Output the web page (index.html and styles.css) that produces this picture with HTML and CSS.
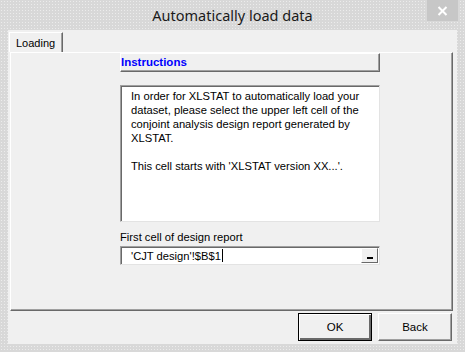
FILE: index.html
```html
<!DOCTYPE html>
<html>
<head>
<meta charset="utf-8">
<link rel="stylesheet" href="styles.css">
</head>
<body>
<div class="window">
  <div class="titlebar">
    <span></span>
    <span class="title">Automatically load data</span>
    <span class="close">
      <svg width="11" height="10" viewBox="0 0 11 10"><path d="M1.5 1 L9.5 9 M9.5 1 L1.5 9" stroke="#fff" stroke-width="2" fill="none"/></svg>
    </span>
  </div>
  <div class="client">
    <div class="tabs">
      <div class="tab">Loading</div>
    </div>
    <div class="panel">
      <div class="content">
        <div class="header">Instructions</div>
        <div class="textbox">
          <p>In order for XLSTAT to automatically load your dataset, please select the upper left cell of the conjoint analysis design report generated by XLSTAT.</p>
          <p>This cell starts with 'XLSTAT version XX...'.</p>
        </div>
        <div class="label">First cell of design report</div>
        <div class="input">
          <span class="value">'CJT design'!$B$1<span class="caret"></span></span>
          <span class="pick"><span class="dash"></span></span>
        </div>
      </div>
    </div>
    <div class="buttons">
      <div class="btn default">OK</div>
      <div class="btn">Back</div>
    </div>
  </div>
</div>
</body>
</html>
```
FILE: styles.css
```css
html, body {
  margin: 0;
  padding: 0;
}
body {
  width: 465px;
  height: 352px;
  overflow: hidden;
  font-family: "Liberation Sans", Arial, sans-serif;
  font-size: 11px;
  color: #000;
}
.window {
  width: 465px;
  height: 352px;
  box-sizing: border-box;
  background-color: #d8d8d8;
  background-image: radial-gradient(circle, #ececec 0.7px, transparent 0.8px);
  background-size: 3px 3px;
  display: flex;
  flex-direction: column;
}
.titlebar {
  height: 30px;
  display: grid;
  grid-template-columns: 1fr auto 1fr;
  align-items: start;
  padding-right: 7px;
}
.title {
  font-family: "Noto Sans", "Open Sans", sans-serif;
  font-size: 14.5px;
  color: #1a1a1a;
  line-height: 20px;
  padding-top: 5px;
  padding-left: 7px;
}
.close {
  justify-self: end;
  width: 31px;
  height: 21px;
  background: #c7c7c7;
  display: flex;
  align-items: center;
  justify-content: center;
}
.client {
  margin: 0 8px 8px 8px;
  height: 314px;
  background: #f0f0f0;
  display: flex;
  flex-direction: column;
}
.tabs {
  display: flex;
  padding: 2px 0 0 1px;
  height: 20px;
  position: relative;
  z-index: 1;
}
.tab {
  height: 20px;
  box-sizing: border-box;
  width: 54px;
  border-top: 1px solid #fff;
  border-left: 1px solid #fff;
  border-right: 1px solid #696969;
  box-shadow: inset -1px 0 0 #a0a0a0;
  background: #f0f0f0;
  padding: 3px 0 0 6px;
  line-height: 14px;
}
.panel {
  margin: 0 4px 0 2px;
  height: 259px;
  box-sizing: border-box;
  border-top: 1px solid #fff;
  border-left: 1px solid #fff;
  border-right: 1px solid #696969;
  border-bottom: 1px solid #696969;
  box-shadow: inset -1px -1px 0 #a0a0a0;
}
.content {
  margin-left: 109px;
  width: 260px;
  display: flex;
  flex-direction: column;
}
.header {
  height: 19px;
  box-sizing: border-box;
  border-top: 1px solid #fff;
  border-left: 1px solid #fff;
  border-right: 1px solid #696969;
  border-bottom: 1px solid #696969;
  box-shadow: inset -1px -1px 0 #a0a0a0;
  color: #0000ff;
  font-weight: bold;
  font-size: 11.5px;
  line-height: 16px;
  padding-left: 0;
}
.textbox {
  margin-top: 13px;
  height: 137px;
  box-sizing: border-box;
  background: #fff;
  border-top: 1px solid #a0a0a0;
  border-left: 1px solid #a0a0a0;
  border-right: 1px solid #e3e3e3;
  border-bottom: 1px solid #e3e3e3;
  box-shadow: inset 1px 1px 0 #696969;
  padding: 3px 8px 0 10px;
  line-height: 14px;
  font-size: 11.2px;
}
.textbox p {
  margin: 0 0 14px 0;
}
.label {
  margin-top: 8px;
  line-height: 14px;
  height: 16px;
  font-size: 11.2px;
}
.input {
  height: 19px;
  box-sizing: border-box;
  background: #fff;
  border-top: 1px solid #a0a0a0;
  border-left: 1px solid #a0a0a0;
  border-right: 1px solid #e3e3e3;
  border-bottom: 1px solid #e3e3e3;
  box-shadow: inset 1px 1px 0 #696969;
  display: flex;
  align-items: stretch;
  justify-content: space-between;
}
.value {
  padding: 2px 0 0 10px;
  line-height: 14px;
  font-size: 11.2px;
  display: flex;
  align-items: flex-start;
}
.caret {
  display: inline-block;
  width: 1px;
  height: 13px;
  background: #000;
  margin-left: 1px;
}
.pick {
  width: 17px;
  box-sizing: border-box;
  margin: 1px 1px 1px 0;
  border-top: 1px solid #fff;
  border-left: 1px solid #fff;
  border-right: 1px solid #696969;
  border-bottom: 1px solid #696969;
  background: #f0f0f0;
  display: flex;
  align-items: flex-end;
  justify-content: center;
  padding-bottom: 3px;
}
.dash {
  width: 6px;
  height: 2px;
  background: #000;
}
.buttons {
  display: flex;
  justify-content: flex-end;
  gap: 6px;
  margin-top: 2px;
  padding-right: 5px;
}
.btn {
  width: 74px;
  height: 28px;
  box-sizing: border-box;
  border-top: 1px solid #fff;
  border-left: 1px solid #fff;
  border-right: 1px solid #696969;
  border-bottom: 1px solid #696969;
  box-shadow: inset -1px -1px 0 #a0a0a0;
  display: flex;
  align-items: center;
  justify-content: center;
  font-size: 11.5px;
  background: #f0f0f0;
}
.btn.default {
  border: 1px solid #000;
  box-shadow: inset 1px 1px 0 #fff, inset -2px -2px 0 #696969;
}
```
